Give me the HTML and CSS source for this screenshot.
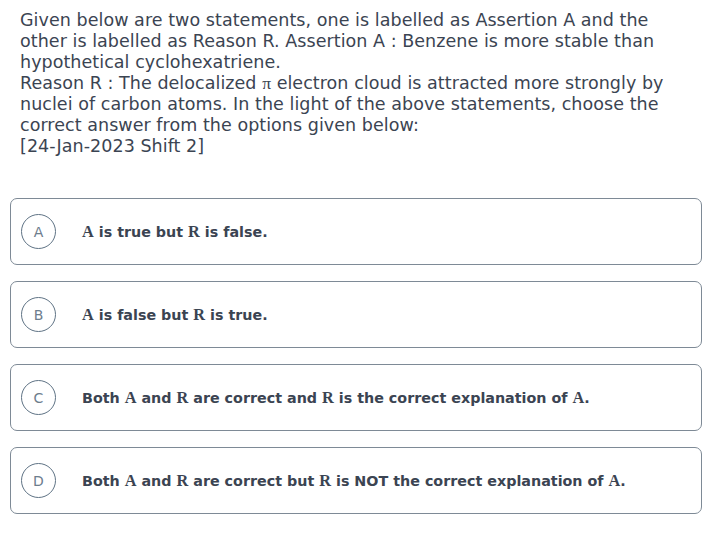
FILE: index.html
```html
<!DOCTYPE html>
<html lang="en">
<head>
<meta charset="utf-8">
<title>Question</title>
<link rel="stylesheet" href="styles.css">
</head>
<body>
<div class="page">
  <div class="question">Given below are two statements, one is labelled as Assertion A and the other is labelled as Reason R. Assertion A : Benzene is more stable than hypothetical cyclohexatriene.<br>Reason R : The delocalized <span class="math">π</span> electron cloud is attracted more strongly by nuclei of carbon atoms. In the light of the above statements, choose the correct answer from the options given below:<br>[24-Jan-2023 Shift 2]</div>
  <div class="options">
    <div class="option"><span class="badge">A</span><span class="label"><span class="m">A</span> is true but <span class="m">R</span> is false.</span></div>
    <div class="option"><span class="badge">B</span><span class="label"><span class="m">A</span> is false but <span class="m">R</span> is true.</span></div>
    <div class="option"><span class="badge">C</span><span class="label">Both <span class="m">A</span> and <span class="m">R</span> are correct and <span class="m">R</span> is the correct explanation of <span class="m">A</span>.</span></div>
    <div class="option"><span class="badge">D</span><span class="label">Both <span class="m">A</span> and <span class="m">R</span> are correct but <span class="m">R</span> is NOT the correct explanation of <span class="m">A</span>.</span></div>
  </div>
</div>
</body>
</html>
```

FILE: styles.css
```css
html, body {
  margin: 0;
  padding: 0;
  background: #ffffff;
}
.page {
  padding: 10px 12px 0 10px;
  font-family: "DejaVu Sans", "Noto Sans", sans-serif;
  color: #3b4452;
}
.question {
  padding: 0 10px;
  font-size: 17.5px;
  line-height: 21px;
  letter-spacing: 0.05px;
}
.math {
  font-family: "Liberation Serif", serif;
  line-height: 1;
}
.options {
  margin-top: 41px;
  display: flex;
  flex-direction: column;
  gap: 16px;
}
.option {
  height: 67px;
  box-sizing: border-box;
  border: 1px solid #7e8a96;
  border-radius: 7px;
  display: flex;
  align-items: center;
  padding: 0 10px;
}
.badge {
  width: 35px;
  height: 35px;
  box-sizing: border-box;
  border: 1px solid #5f7385;
  border-radius: 50%;
  display: flex;
  align-items: center;
  justify-content: center;
  font-size: 14px;
  color: #6d7d8d;
  flex-shrink: 0;
}
.label {
  margin-left: 26px;
  font-size: 14.3px;
  font-weight: 700;
  color: #3b4452;
}
.m {
  font-family: "Liberation Serif", serif;
  font-size: 16.3px;
  font-weight: 700;
}
```
